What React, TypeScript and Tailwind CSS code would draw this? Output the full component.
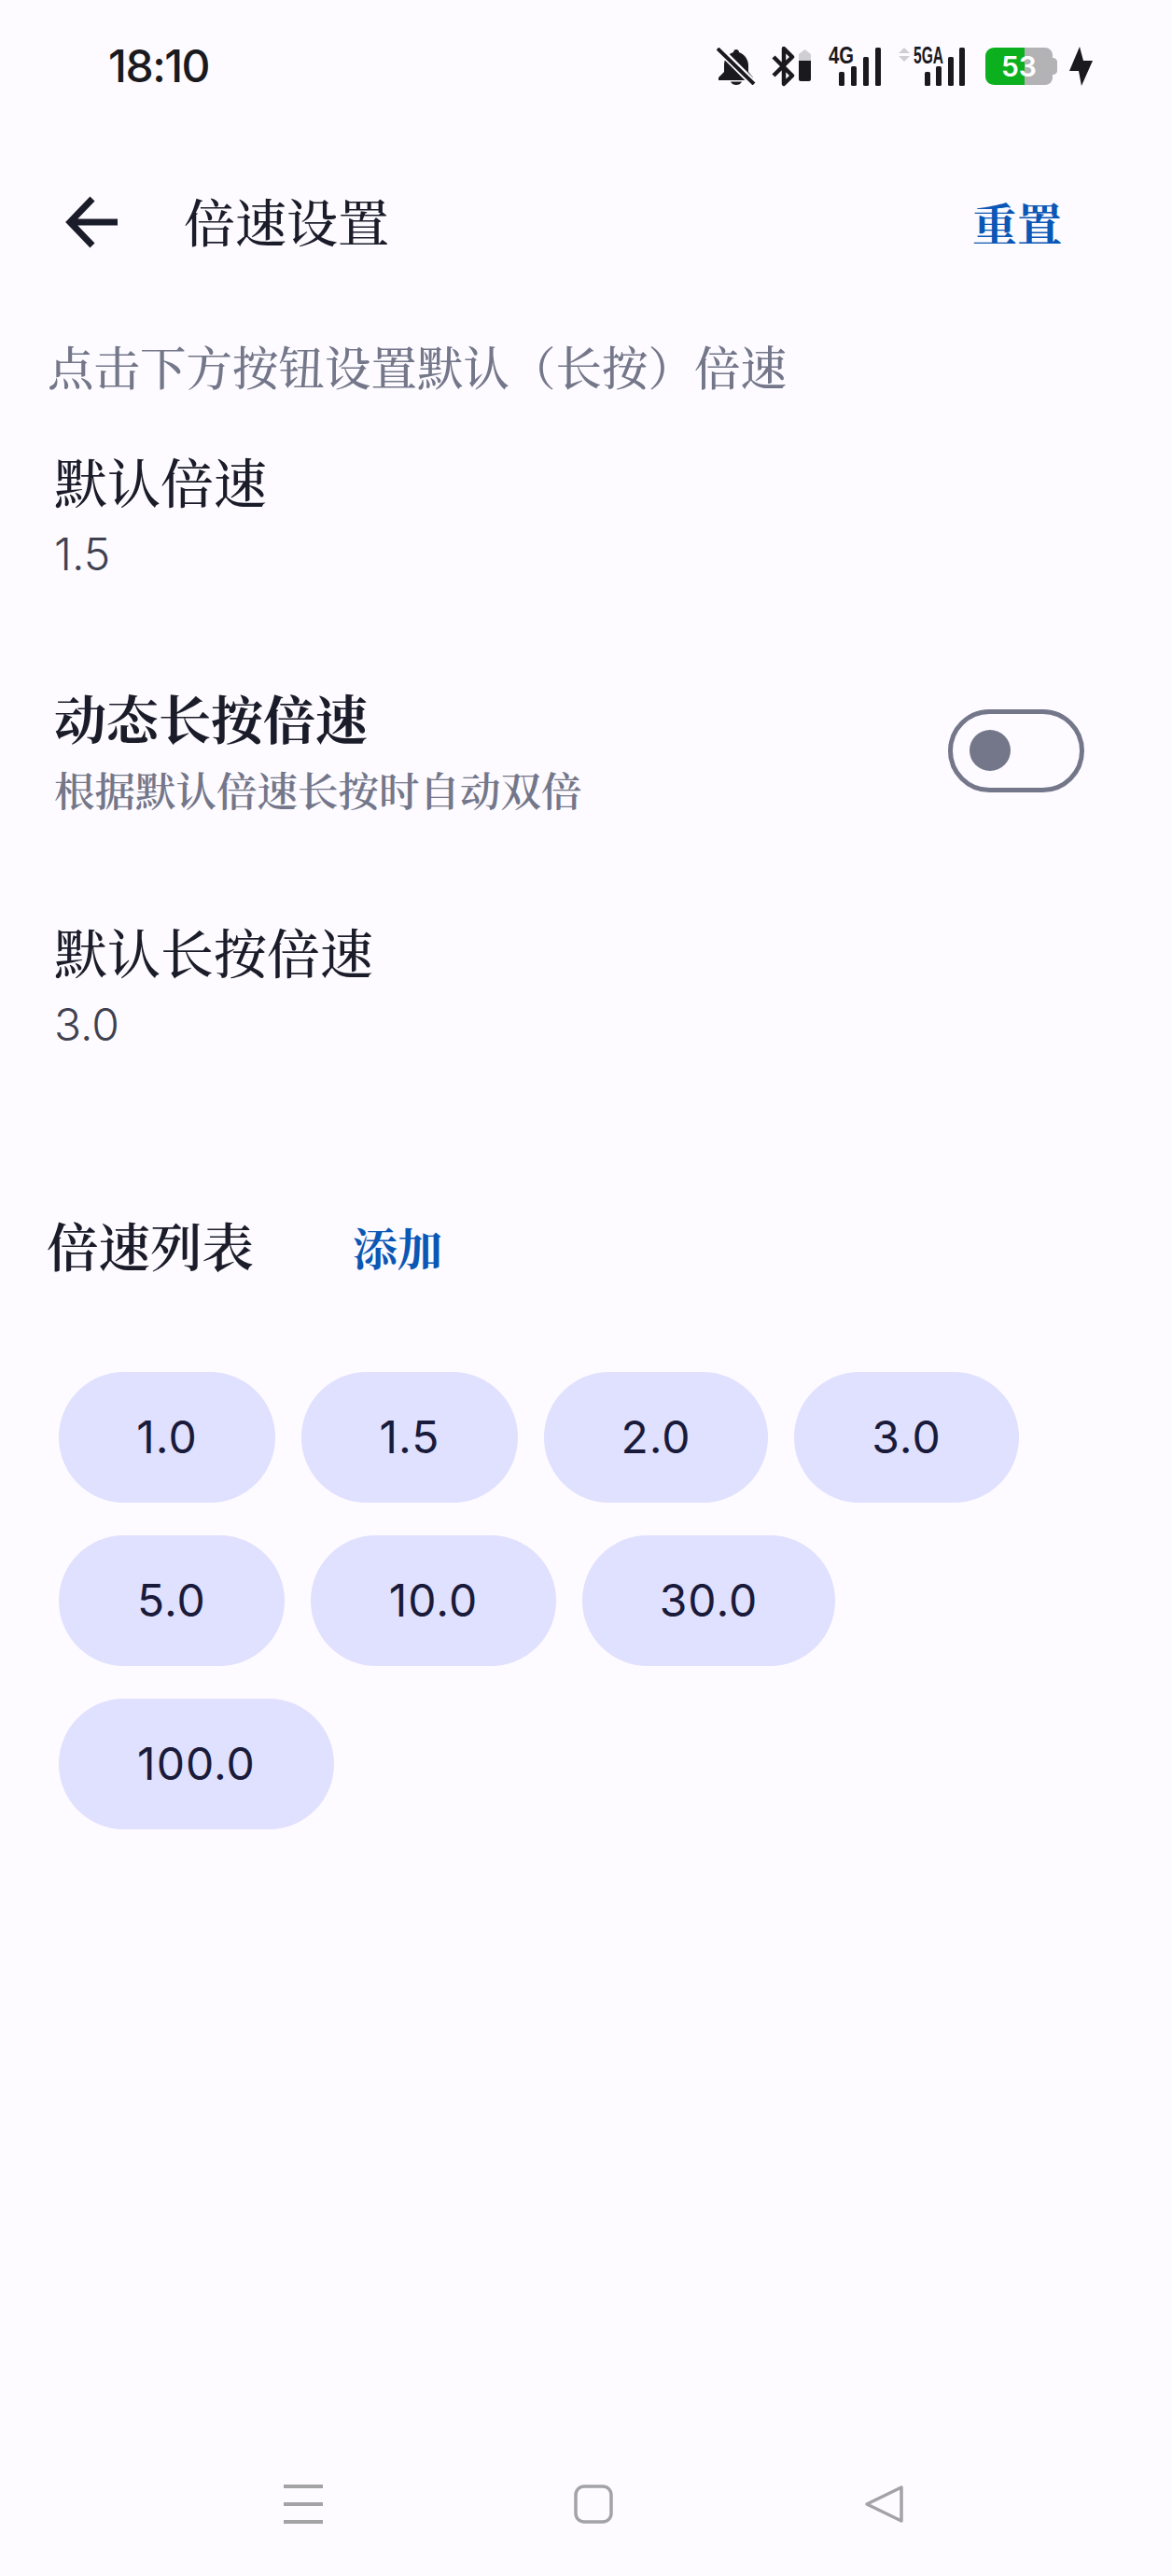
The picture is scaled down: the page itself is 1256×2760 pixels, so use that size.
import React from "react";

const cjk = "font-['Noto_Serif_CJK_SC','Noto_Sans_CJK_SC',serif]";
const latin = "font-['Inter','Noto_Sans_CJK_SC',sans-serif]";

const speedRows = [
	[
		{ label: "1.0", width: "w-[232px]" },
		{ label: "1.5", width: "w-[232px]" },
		{ label: "2.0", width: "w-[240px]" },
		{ label: "3.0", width: "w-[241px]" },
	],
	[
		{ label: "5.0", width: "w-[242px]" },
		{ label: "10.0", width: "w-[263px]" },
		{ label: "30.0", width: "w-[271px]" },
	],
	[{ label: "100.0", width: "w-[295px]" }],
];

// Status bar icons
const BellOff = () => (
	<svg width="42" height="40" viewBox="0 0 42 40" className="text-[#1a1a1e]">
		<path
			fill="currentColor"
			d="M21 2c-1.500 0-3 1.200-3 3C11 7 8 13 8 19v7l-6 6v3h37v-3l-5-6v-7c0-6-4-12-10-14 0-1.800-1.500-3-3-3z"
		/>
		<path fill="currentColor" d="M15 36.500h12c-1 2.500-3.500 3.500-6 3.500s-5-1-6-3.500z" />
		<path d="M1 0l40 40" stroke="#fdfbff" strokeWidth="8" />
		<path d="M1 1l39 38" stroke="currentColor" strokeWidth="4" />
	</svg>
);

const BluetoothBattery = () => (
	<svg width="42" height="44" viewBox="0 0 42 44" fill="none" className="ml-[17px] text-[#1a1a1e]">
		<path
			d="M2 12l20 20-9 9V3l9 9L2 32"
			stroke="currentColor"
			strokeWidth="4.500"
			strokeLinejoin="round"
		/>
		<path d="M29 9l6.500-5 6.500 5v12H29z" fill="#cfcfd2" />
		<path d="M29 16h13v20c0 1-1 2-2 2h-9c-1 0-2-1-2-2z" fill="currentColor" />
	</svg>
);

const Bars = ({ x }: { x: number[] }) => (
	<>
		{[27, 21, 11, 1].map((top, i) => (
			<rect key={i} x={x[i]} y={top} width="6" height={42 - top} rx="1.500" fill="#1a1a1e" />
		))}
	</>
);

const Signal4G = () => (
	<svg width="56" height="49" viewBox="0 -6 56 49" className="ml-[19px] mb-[6px]">
		<text
			x="0"
			y="18"
			fontSize="25"
			fontWeight="700"
			fontFamily="Liberation Sans"
			fill="#1a1a1e"
			textLength="27"
			lengthAdjust="spacingAndGlyphs"
		>
			4G
		</text>
		<Bars x={[11, 24, 37, 50]} />
	</svg>
);

const Signal5GA = () => (
	<svg width="72" height="49" viewBox="0 -6 72 49" className="ml-[19px] mb-[6px]">
		<path d="M6 1l6 6H0zM0 10h12l-6 6z" fill="#cfcfd2" />
		<text
			x="16"
			y="18"
			fontSize="25"
			fontWeight="700"
			fontFamily="Liberation Sans"
			fill="#1a1a1e"
			textLength="32"
			lengthAdjust="spacingAndGlyphs"
		>
			5GA
		</text>
		<Bars x={[28, 40, 53, 65]} />
	</svg>
);

const Battery = () => (
	<svg width="77" height="40" viewBox="0 0 77 40" className="ml-[21px]">
		<path d="M42 0h22c4 0 8 3 8 8v3c3 0 5 2 5 4v10c0 2-2 4-5 4v3c0 5-4 8-8 8H42z" fill="#b3b3b6" />
		<path d="M42 0H10C4 0 0 4 0 9v22c0 5 4 9 10 9h32z" fill="#0cb01f" />
		<text x="17" y="31" fontSize="30" fontWeight="600" fontFamily="Inter" fill="#ffffff">
			53
		</text>
	</svg>
);

const Bolt = () => (
	<svg width="25" height="44" viewBox="0 0 25 44" className="ml-[13px]">
		<path d="M11 1L0 27h10l3 16 12-27H15z" fill="#1a1a1e" />
	</svg>
);

const StatusBar = () => (
	<div className="h-[142px] flex items-center pl-[116px] pr-[85px]">
		<span className={`${latin} text-[48px] font-medium tracking-[-1.500px] text-[#1a1a1e]`}>18:10</span>
		<div className="ml-auto flex items-center">
			<BellOff />
			<BluetoothBattery />
			<Signal4G />
			<Signal5GA />
			<Battery />
			<Bolt />
		</div>
	</div>
);

const Header = () => (
	<div className="h-[192px] flex items-center pl-[70px] pr-[118px]">
		<svg width="56" height="56" viewBox="0 0 56 56" fill="none">
			<path d="M56 28H5M29 3L5 28l24 25" stroke="#1b1c2a" strokeWidth="7" />
		</svg>
		<span className={`${cjk} ml-[71px] pb-[6px] text-[55px] leading-none font-medium text-[#1b1c2a]`}>倍速设置</span>
		<span className={`${cjk} ml-auto text-[48px] leading-none font-bold text-[#0b57b5]`}>重置</span>
	</div>
);

const ValueRow = ({ title, value }: { title: string; value: string }) => (
	<div className="pl-[58px]">
		<div className={`${cjk} text-[57px] leading-[72px] font-medium text-[#1b1c2a]`}>{title}</div>
		<div className={`${latin} text-[48px] leading-[88px] font-light text-[#3f4150]`}>{value}</div>
	</div>
);

const App = () => {
	return (
		<div className="w-[1256px] h-[2760px] flex flex-col bg-[#fdfbff] overflow-hidden">
			<StatusBar />
			<Header />

			<div className={`${cjk} h-[116px] flex items-center pl-[51px] text-[49.500px] font-medium text-[#74778a]`}>
				点击下方按钮设置默认（长按）倍速
			</div>

			<div className="mt-[28px]">
				<ValueRow title="默认倍速" value="1.5" />
			</div>

			{/* Dynamic long-press toggle */}
			<div className="mt-[94px] flex items-center pl-[58px] pr-[94px]">
				<div>
					<div className={`${cjk} text-[56px] leading-[72px] font-bold text-[#1b1c2a]`}>动态长按倍速</div>
					<div className={`${cjk} text-[43.500px] leading-[82px] font-semibold text-[#74778a]`}>
						根据默认倍速长按时自动双倍
					</div>
				</div>
				<div className="ml-auto mb-[10px] w-[146px] h-[89px] rounded-full border-[5px] border-[#74778a] flex items-center pl-[18px]">
					<div className="w-[44px] h-[44px] rounded-full bg-[#74778a]" />
				</div>
			</div>

			<div className="mt-[96px]">
				<ValueRow title="默认长按倍速" value="3.0" />
			</div>

			<div className="mt-[152px] flex items-center pl-[50px]">
				<span className={`${cjk} text-[55.500px] leading-[72px] font-semibold text-[#1b1c2a]`}>倍速列表</span>
				<span className={`${cjk} ml-[106px] mt-[6px] text-[48px] font-bold text-[#0b57b5]`}>添加</span>
			</div>

			{/* Speed chips */}
			<div className="mt-[98px] pl-[63px] flex flex-col gap-y-[35px]">
				{speedRows.map((row, i) => (
					<div key={i} className="flex gap-x-[28px]">
						{row.map((speed) => (
							<div
								key={speed.label}
								className={`${latin} ${speed.width} h-[140px] rounded-[70px] bg-[#e0e0ff] flex items-center justify-center text-[48px] tracking-[1px] text-[#1a1b3a]`}
							>
								{speed.label}
							</div>
						))}
					</div>
				))}
			</div>

			{/* Nav bar */}
			<div className="mt-auto mb-[56px] pl-[304px] flex gap-x-[269px] text-[#a3a3a6]">
				<svg width="42" height="42" viewBox="0 0 42 42" fill="currentColor">
					<rect x="0" y="0" width="42" height="4" />
					<rect x="0" y="19" width="42" height="4" />
					<rect x="0" y="38" width="42" height="4" />
				</svg>
				<svg width="42" height="42" viewBox="0 0 42 42" fill="none" stroke="currentColor" strokeWidth="3.500">
					<rect x="2" y="2" width="38" height="38" rx="9" />
				</svg>
				<svg width="42" height="42" viewBox="0 0 42 42" fill="none" stroke="currentColor" strokeWidth="3.500" strokeLinejoin="round">
					<path d="M40 3v36L3 21z" />
				</svg>
			</div>
		</div>
	);
};

export default App;
